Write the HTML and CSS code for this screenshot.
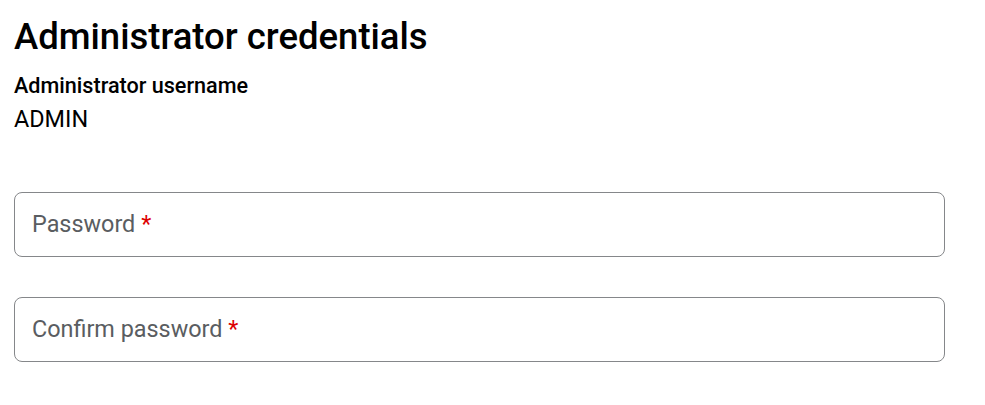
FILE: index.html
```html
<!DOCTYPE html>
<html lang="en">
<head>
    <meta charset="UTF-8">
    <title>Administrator credentials</title>
    <link rel="stylesheet" href="styles.css">
</head>
<body>
    <div class="container">
        <h1>Administrator credentials</h1>
        <div class="user-block">
            <h2>Administrator username</h2>
            <p>ADMIN</p>
        </div>
        <div class="field">
            <label class="field-label">Password <span class="required">*</span></label>
        </div>
        <div class="field">
            <label class="field-label">Confirm password <span class="required">*</span></label>
        </div>
    </div>
</body>
</html>
```

FILE: styles.css
```css
body {
    font-family: 'Roboto', sans-serif;
    background: #fff;
    margin: 0;
    padding: 0;
    color: #000;
}
.container {
    width: 931px;
    padding: 15px 14px;
}
h1 {
    font-size: 36.5px;
    font-weight: 500;
    margin: 0 0 13px;
    line-height: 44px;
}
.user-block h2 {
    font-size: 21.6px;
    font-weight: 500;
    margin: 0;
    line-height: 28px;
}
.user-block p {
    font-size: 23.4px;
    margin: 5px 0 0;
    line-height: 28px;
}
.user-block {
    margin-bottom: 59px;
}
.field {
    height: 63px;
    box-sizing: content-box;
    border: 1px solid #85878a;
    border-radius: 8px;
    display: flex;
    align-items: center;
    padding: 0 17px 2px;
    height: 61px;
    margin-bottom: 40px;
}
.field-label {
    font-size: 23.4px;
    color: #5a5d61;
}
.required {
    color: #dd0000;
}
```
